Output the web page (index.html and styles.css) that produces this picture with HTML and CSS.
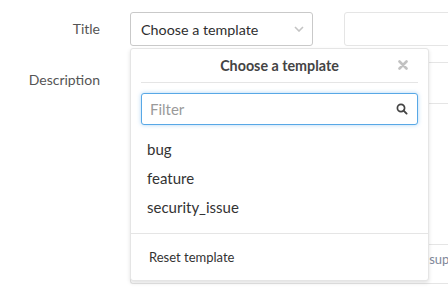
FILE: index.html
```html
<!DOCTYPE html>
<html lang="en">
<head>
    <meta charset="UTF-8">
    <title>New issue</title>
    <link rel="stylesheet" href="styles.css">
</head>
<body>
    <form class="issue-form">
        <div class="form-row">
            <label class="form-label">Title</label>
            <div class="title-fields">
                <div class="template-select">
                    <button type="button" class="select-toggle">
                        <span>Choose a template</span>
                        <svg class="chevron" width="10" height="6" viewBox="0 0 10 6"><path d="M1 1l4 4 4-4" fill="none" stroke="#c4c4c4" stroke-width="1.6"/></svg>
                    </button>
                    <div class="dropdown-menu">
                        <div class="dropdown-title">
                            <span>Choose a template</span>
                            <svg class="close-icon" width="10" height="10" viewBox="0 0 10 10"><path d="M1.5 1.5l7 7M8.5 1.5l-7 7" stroke="#c2c2c2" stroke-width="2.6" stroke-linecap="round"/></svg>
                        </div>
                        <div class="dropdown-filter">
                            <input type="text" class="filter-input" placeholder="Filter">
                            <svg class="search-icon" width="12" height="12" viewBox="0 0 12 12"><circle cx="5" cy="5" r="3.6" fill="none" stroke="#444" stroke-width="1.7"/><path d="M7.6 7.6l3 3" stroke="#444" stroke-width="1.9" stroke-linecap="round"/></svg>
                        </div>
                        <ul class="dropdown-list">
                            <li>bug</li>
                            <li>feature</li>
                            <li>security_issue</li>
                        </ul>
                        <div class="dropdown-footer">Reset template</div>
                    </div>
                </div>
                <input type="text" class="title-input">
            </div>
        </div>
        <div class="form-row">
            <label class="form-label desc-label">Description</label>
            <div class="md-area">
                <div class="md-tabs"></div>
                <div class="md-body"></div>
                <div class="md-footer">Markdown and quick actions are supported</div>
            </div>
        </div>
    </form>
</body>
</html>
```

FILE: styles.css
```css
body {
    margin: 0;
    font-family: Lato, "Open Sans", sans-serif;
    font-size: 14px;
    color: #2e2e2e;
    background: #fff;
    overflow: hidden;
}
.issue-form {
    padding-top: 12px;
}
.form-row {
    display: flex;
    margin-bottom: 16px;
}
.form-label {
    width: 100px;
    flex-shrink: 0;
    margin-right: 30px;
    text-align: right;
    line-height: 34px;
    color: #555;
}
.desc-label {
    padding-top: 1px;
}
.title-fields {
    display: flex;
    flex: 1;
    gap: 31px;
}
.template-select {
    position: relative;
    width: 183px;
    flex-shrink: 0;
}
.select-toggle {
    width: 100%;
    height: 34px;
    display: flex;
    align-items: center;
    justify-content: space-between;
    padding: 0 8px 0 10px;
    border: 1px solid #c9c9c9;
    border-radius: 3px;
    background: #fff;
    font: inherit;
    font-size: 14.3px;
    color: #2e2e2e;
}
.title-input {
    flex: 1;
    height: 34px;
    box-sizing: border-box;
    border: 1px solid #e5e5e5;
    border-radius: 3px;
    margin-right: -20px;
}
.dropdown-menu {
    position: absolute;
    top: 36px;
    left: 0;
    width: 299px;
    box-sizing: border-box;
    background: #fff;
    border: 1px solid #e5e5e5;
    border-radius: 3px;
    box-shadow: 0 2px 4px rgba(0, 0, 0, 0.12);
    z-index: 2;
}
.dropdown-title {
    position: relative;
    margin: 0 10px;
    height: 33px;
    line-height: 33px;
    text-align: center;
    font-weight: bold;
    font-size: 14.3px;
    color: #444;
    border-bottom: 1px solid #e5e5e5;
}
.close-icon {
    position: absolute;
    right: 10px;
    top: 11px;
}
.dropdown-filter {
    position: relative;
    margin: 10px 10px 0;
}
.filter-input {
    width: 100%;
    height: 32px;
    box-sizing: border-box;
    border: 1px solid #58a8e6;
    border-radius: 3px;
    box-shadow: 0 0 4px rgba(80, 165, 230, 0.45);
    padding: 0 8px;
    font: inherit;
    font-size: 15px;
    outline: none;
}
.filter-input::placeholder {
    color: #9a9a9a;
}
.search-icon {
    position: absolute;
    right: 10px;
    top: 10px;
}
.dropdown-list {
    list-style: none;
    margin: 10px 0 11px;
    padding: 0;
}
.dropdown-list li {
    padding: 0 16px;
    line-height: 29px;
    font-size: 15px;
    color: #333;
}
.dropdown-footer {
    border-top: 1px solid #e5e5e5;
    padding: 0 18px;
    line-height: 46px;
    font-size: 13px;
    color: #333;
}
.md-area {
    flex: 1;
    border: 1px solid #e5e5e5;
    border-right: none;
    border-radius: 3px 0 0 3px;
}
.md-tabs {
    height: 40px;
    border-bottom: 1px solid #e5e5e5;
}
.md-body {
    height: 140px;
    border-bottom: 1px solid #e5e5e5;
}
.md-footer {
    height: 38px;
    line-height: 28px;
    padding-left: 110px;
    font-size: 13px;
    white-space: nowrap;
    color: #80889a;
}
```
